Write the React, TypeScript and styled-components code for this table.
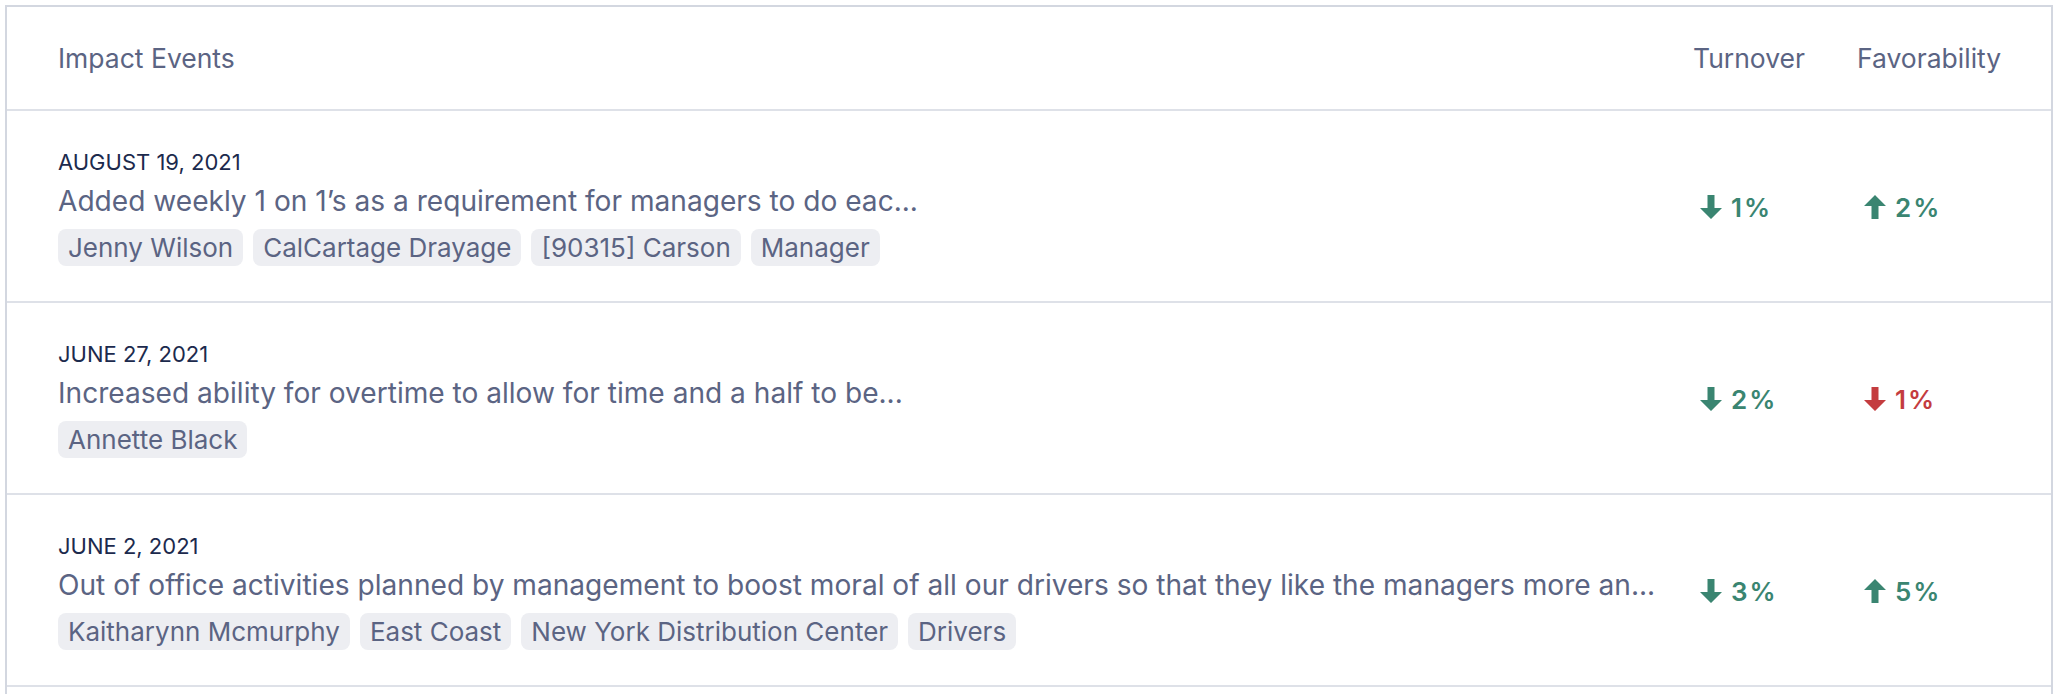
import styled, { createGlobalStyle } from "styled-components";

type Trend = "up" | "down";

type Change = {
    dir: Trend;
    value: number;
    good: boolean;
};

type ImpactEvent = {
    date: string;
    text: string;
    tags: string[];
    turnover: Change;
    favorability: Change;
};

const events: ImpactEvent[] = [
    {
        date: "August 19, 2021",
        text: "Added weekly 1 on 1’s as a requirement for managers to do eac...",
        tags: ["Jenny Wilson", "CalCartage Drayage", "[90315] Carson", "Manager"],
        turnover: {dir: "down", value: 1, good: true},
        favorability: {dir: "up", value: 2, good: true},
    },
    {
        date: "June 27, 2021",
        text: "Increased ability for overtime to allow for time and a half to be...",
        tags: ["Annette Black"],
        turnover: {dir: "down", value: 2, good: true},
        favorability: {dir: "down", value: 1, good: false},
    },
    {
        date: "June 2, 2021",
        text: "Out of office activities planned by management to boost moral of all our drivers so that they like the managers more an...",
        tags: ["Kaitharynn Mcmurphy", "East Coast", "New York Distribution Center", "Drivers"],
        turnover: {dir: "down", value: 3, good: true},
        favorability: {dir: "up", value: 5, good: true},
    },
];

const GlobalStyle = createGlobalStyle`
    body {
        margin: 0;
        background: #ffffff;
        font-family: Inter, "Noto Sans", sans-serif;
    }
`

const Arrow = ({dir}: { dir: Trend }) => (
    <svg width="24" height="26" viewBox="0 0 24 26" fill="currentColor">
        {dir === "down"
            ? <path d="M8.5 1h7v13h7.5L12 25 1 14h7.5z"/>
            : <path d="M8.5 25h7V12h7.5L12 1 1 12h7.5z"/>}
    </svg>
);

const ChangeCell = ({change}: { change: Change }) => (
    <Delta $good={change.good}>
        <Arrow dir={change.dir}/>
        <span>{change.value}%</span>
    </Delta>
);

export default function App() {
    return (
        <Page>
            <GlobalStyle/>
            <Table>
                <HeaderRow>
                    <HeadCell>Impact Events</HeadCell>
                    <HeadCell>Turnover</HeadCell>
                    <HeadCell>Favorability</HeadCell>
                </HeaderRow>
                {events.map((ev) => (
                    <Row key={ev.date}>
                        <EventInfo>
                            <EventDate>{ev.date}</EventDate>
                            <EventText>{ev.text}</EventText>
                            <Tags>
                                {ev.tags.map((t) => <Tag key={t}>{t}</Tag>)}
                            </Tags>
                        </EventInfo>
                        <ChangeCell change={ev.turnover}/>
                        <ChangeCell change={ev.favorability}/>
                    </Row>
                ))}
            </Table>
        </Page>
    );
}

const Page = styled.div`
    padding: 5px 7px 0 5px;
    height: 694px;
    box-sizing: border-box;
    overflow: hidden;
`

const Table = styled.div`
    border: 2px solid #d3d7e0;
    border-bottom: none;
    min-height: 720px;
    background: #fff;
`

const grid = `
    display: grid;
    grid-template-columns: minmax(0, 1fr) 134px 144px;
    column-gap: 30px;
    padding: 0 50px 0 51px;
    align-items: center;
    border-bottom: 2px solid #dee1e8;
`

const HeaderRow = styled.div`
    ${grid};
    height: 102px;
`

const HeadCell = styled.div`
    font-size: 26.5px;
    color: #5b6483;
    white-space: nowrap;
`

const Row = styled.div`
    ${grid};
    height: 190px;
`

const EventInfo = styled.div`
    align-self: start;
    padding-top: 37px;
    display: flex;
    flex-direction: column;
    min-width: 0;
`

const EventDate = styled.div`
    font-size: 22px;
    line-height: 28px;
    text-transform: uppercase;
    color: #1c2a4d;
`

const EventText = styled.div`
    margin-top: 7px;
    font-size: 28.1px;
    line-height: 36px;
    color: #5b6483;
    white-space: nowrap;
    overflow: hidden;
    text-overflow: ellipsis;
`

const Tags = styled.div`
    display: flex;
    flex-wrap: wrap;
    gap: 10px;
    margin-top: 10px;
`

const Tag = styled.span`
    display: inline-flex;
    align-items: center;
    height: 37px;
    padding: 0 10px;
    border-radius: 8px;
    background: #edeef2;
    color: #5b6483;
    font-size: 26px;
    white-space: nowrap;
`

const Delta = styled.div<{ $good: boolean }>`
    display: flex;
    align-items: center;
    gap: 8px;
    padding-left: 6px;
    color: ${p => p.$good ? "#3a8571" : "#c43c3f"};
    font-size: 26px;
    font-weight: 600;
    letter-spacing: 2px;
    margin-top: 2px;

    svg {
        flex-shrink: 0;
    }
`
